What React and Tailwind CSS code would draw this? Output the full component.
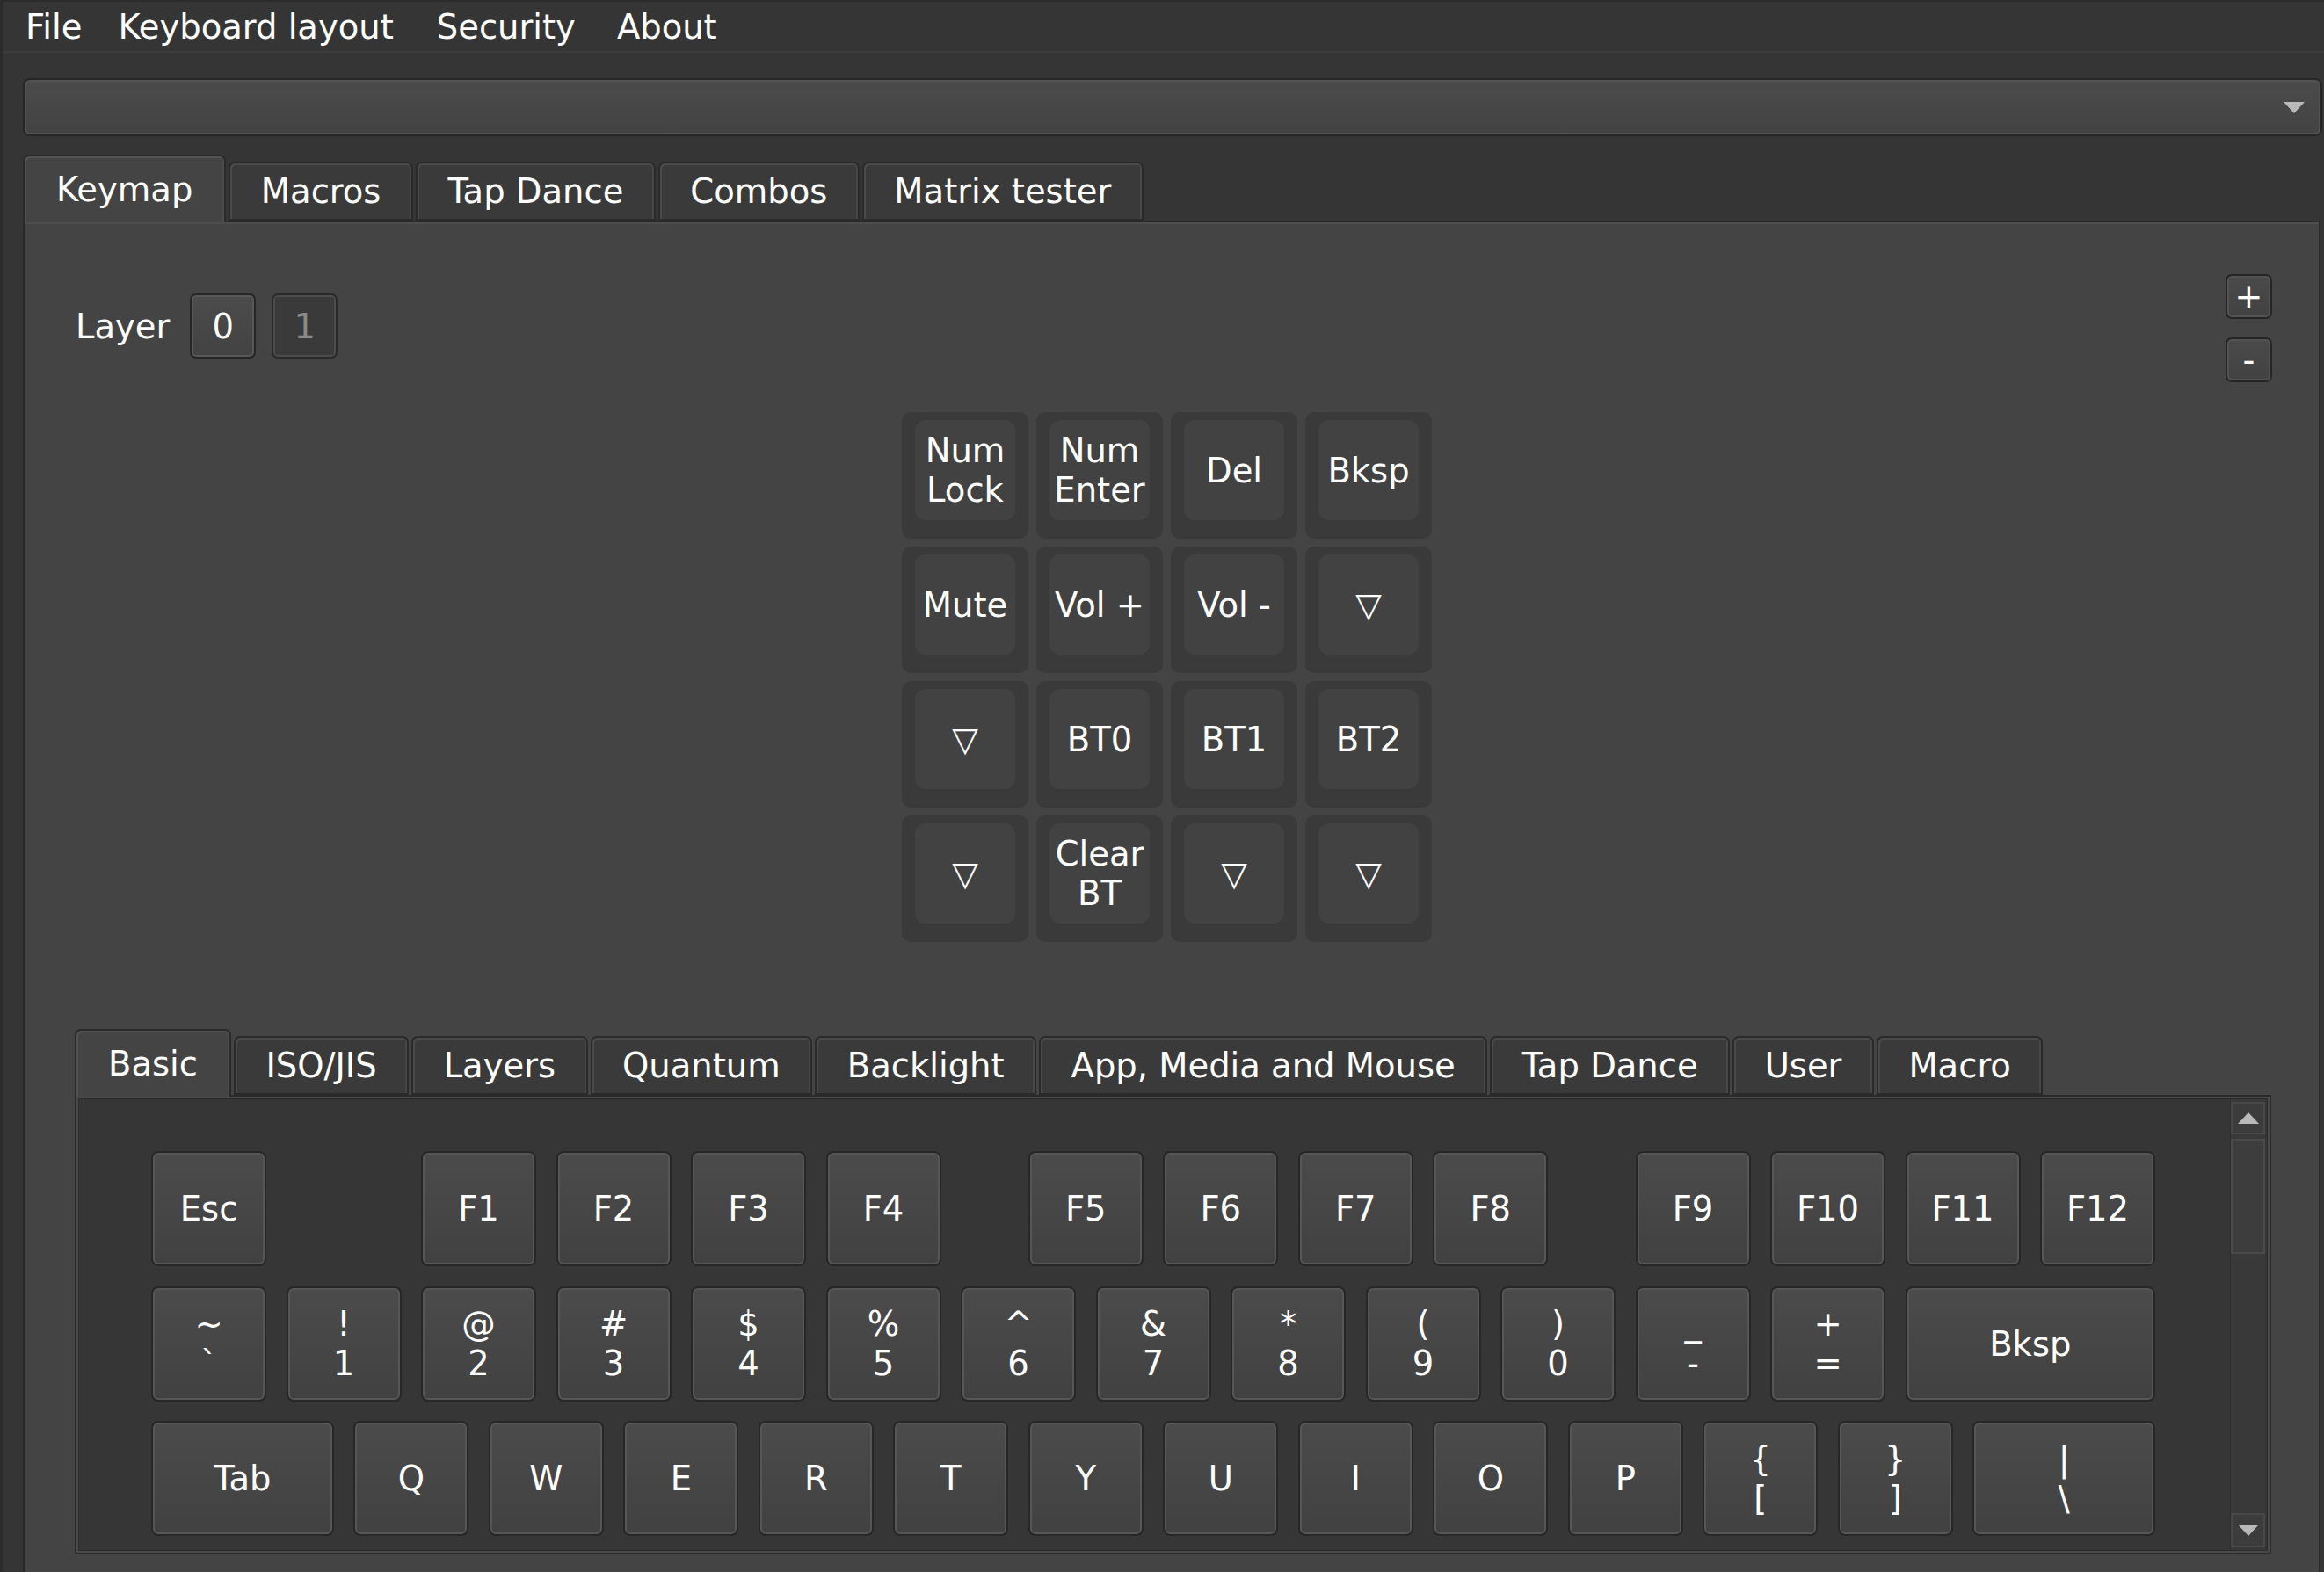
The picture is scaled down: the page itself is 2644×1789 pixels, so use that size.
import React from 'react'

// one keyboard unit, in px
const U = 153.5

const menus = [
  ['File', ''],
  ['Keyboard layout', 'ml-[41px]'],
  ['Security', 'ml-[49px]'],
  ['About', 'ml-[47px]'],
]

const mainTabs = ['Keymap', 'Macros', 'Tap Dance', 'Combos', 'Matrix tester']
const keyTabs = ['Basic', 'ISO/JIS', 'Layers', 'Quantum', 'Backlight', 'App, Media and Mouse', 'Tap Dance', 'User', 'Macro']

const matrix = [
  ['Num\nLock', 'Num\nEnter', 'Del', 'Bksp'],
  ['Mute', 'Vol +', 'Vol -', '▽'],
  ['▽', 'BT0', 'BT1', 'BT2'],
  ['▽', 'Clear\nBT', '▽', '▽'],
]

const rows = [
  [
    { l: 'Esc' }, { gap: 1 },
    { l: 'F1' }, { l: 'F2' }, { l: 'F3' }, { l: 'F4' }, { gap: 0.5 },
    { l: 'F5' }, { l: 'F6' }, { l: 'F7' }, { l: 'F8' }, { gap: 0.5 },
    { l: 'F9' }, { l: 'F10' }, { l: 'F11' }, { l: 'F12' },
  ],
  [
    ...[['~', '`'], ['!', '1'], ['@', '2'], ['#', '3'], ['$', '4'], ['%', '5'], ['^', '6'],
      ['&', '7'], ['*', '8'], ['(', '9'], [')', '0'], ['_', '-'], ['+', '=']].map(l => ({ l })),
    { l: 'Bksp', w: 2 },
  ],
  [
    { l: 'Tab', w: 1.5 },
    ...'QWERTYUIOP'.split('').map(l => ({ l })),
    { l: ['{', '['] }, { l: ['}', ']'] },
    { l: ['|', '\\'], w: 1.5 },
  ],
]

function TabBar({ tabs, active }) {
  return (
    <div className="relative z-10 flex h-[75px] items-end gap-[3px]">
      {tabs.map((t, i) =>
        i === active ? (
          <div
            key={t}
            className="-mb-[2px] flex h-[77px] items-center rounded-t-[7px] border-2 border-b-0 border-[#2a2a2a] bg-[#444444] px-[36px] shadow-[inset_2px_2px_0_#525252,inset_-2px_0_0_#4c4c4c]"
          >
            {t}
          </div>
        ) : (
          <div
            key={t}
            className="flex h-[67px] items-center rounded-t-[7px] border-2 border-[#2a2a2a] bg-[#3a3a3a] px-[34.5px] shadow-[inset_2px_2px_0_#4a4a4a,inset_-2px_0_0_#474747]"
          >
            {t}
          </div>
        )
      )}
    </div>
  )
}

function Key({ l, w = 1 }) {
  const lines = Array.isArray(l) ? l : [l]
  return (
    <div className="h-full shrink-0" style={{ width: w * U }}>
      <div
        className="flex h-[131px] flex-col items-center justify-center rounded-[8px] border-2 border-[#272727] bg-linear-to-b from-[#4b4b4b] to-[#414141] shadow-[inset_0_0_0_2px_#565656]"
        style={{ width: w * U - 22.4 }}
      >
        {lines.map((s, i) => (
          <span key={i} className="whitespace-pre">{s}</span>
        ))}
      </div>
    </div>
  )
}

function MatrixKey({ label }) {
  return (
    <div className="h-[144px] w-[144px] rounded-[10px] bg-[#3a3a3a] px-[15px] pt-[9px]">
      <div className="flex h-[114px] items-center justify-center whitespace-pre-line rounded-[12px] bg-[#424242] text-center">
        {label}
      </div>
    </div>
  )
}

function Triangle({ up }) {
  return (
    <svg width="24" height="13" viewBox="0 0 24 13">
      <polygon points={up ? '0,13 24,13 12,0' : '0,0 24,0 12,13'} fill="#b9b9b9" />
    </svg>
  )
}

function Scrollbar() {
  return (
    <div className="mr-[2px] flex w-[40px] flex-col border-l border-[#2e2e2e] bg-[#393939] py-[3px]">
      <div className="flex h-[37px] items-center justify-center border-2 border-[#484848] bg-[#3c3c3c]">
        <Triangle up />
      </div>
      <div className="mt-[5px] h-[131px] border-2 border-[#4a4a4a] bg-[#3d3d3d]" />
      <div className="flex-1" />
      <div className="flex h-[39px] items-center justify-center border-2 border-[#484848] bg-[#3c3c3c]">
        <Triangle />
      </div>
    </div>
  )
}

export default function App() {
  return (
    <div className="flex h-[1789px] w-[2644px] flex-col overflow-hidden border-t-2 border-l-[3px] border-[#2b2b2b] bg-[#353535] font-['DejaVu_Sans',sans-serif] text-[38.5px] leading-[45px] text-white">
      {/* menu bar */}
      <div className="flex h-[58px] shrink-0 items-center border-b-2 border-[#3c3c3c] pl-[26px]">
        {menus.map(([m, gap]) => (
          <span key={m} className={gap}>{m}</span>
        ))}
      </div>

      <div className="flex flex-col pl-[23px] pr-[2px] pt-[29px]">
        {/* keyboard selector */}
        <div className="flex h-[66px] items-center justify-end rounded-[8px] border-2 border-[#262626] bg-linear-to-b from-[#4b4b4b] to-[#434343] pr-[18px] shadow-[inset_0_0_0_2px_#525252]">
          <Triangle />
        </div>

        <div className="mt-[21px] mr-[2px]">
          <TabBar tabs={mainTabs} active={0} />
        </div>

        <div className="mr-[2px] h-[1600px] shrink-0 border-2 border-[#2a2a2a] bg-[#444444] shadow-[inset_0_2px_0_#4e4e4e]">
          {/* layer selector and add/remove */}
          <div className="flex items-start justify-between pl-[58px] pr-[53px] pt-[59px]">
            <div className="mt-[22px] flex items-center">
              <span>Layer</span>
              <div className="ml-[23px] flex h-[74px] w-[75px] items-center justify-center rounded-[7px] border-2 border-[#262626] bg-linear-to-b from-[#4c4c4c] to-[#424242] shadow-[inset_0_0_0_2px_#585858]">
                0
              </div>
              <div className="ml-[18px] flex h-[74px] w-[75px] items-center justify-center rounded-[7px] border-2 border-[#2a2a2a] bg-[#3a3a3a] text-[#8a8a8a] shadow-[inset_0_0_0_2px_#4c4c4c]">
                1
              </div>
            </div>
            <div className="flex flex-col gap-[21px]">
              <div className="flex h-[51px] w-[53px] items-center justify-center rounded-[7px] border-2 border-[#262626] bg-linear-to-b from-[#4a4a4a] to-[#424242] shadow-[inset_0_0_0_2px_#535353]">
                +
              </div>
              <div className="flex h-[51px] w-[53px] items-center justify-center rounded-[7px] border-2 border-[#262626] bg-linear-to-b from-[#4a4a4a] to-[#424242] shadow-[inset_0_0_0_2px_#535353]">
                -
              </div>
            </div>
          </div>

          {/* device matrix */}
          <div className="mt-[34px] flex justify-center pr-[11px]">
            <div className="grid grid-cols-4 gap-[9px]">
              {matrix.flat().map((k, i) => (
                <MatrixKey key={i} label={k} />
              ))}
            </div>
          </div>

          {/* keycode picker */}
          <div className="mt-[99px] pl-[57px] pr-[54px]">
            <TabBar tabs={keyTabs} active={0} />
            <div className="flex h-[523px] border-2 border-[#2a2a2a] bg-[#4a4a4a] p-[2px]">
              <div className="flex flex-1 overflow-hidden border border-[#2b2b2b] bg-[#363636]">
                <div className="flex flex-1 flex-col overflow-hidden pl-[82px] pt-[59px]">
                  {rows.map((row, r) => (
                    <div key={r} className="flex shrink-0" style={{ height: U }}>
                      {row.map((k, i) =>
                        k.gap ? (
                          <div key={i} className="shrink-0" style={{ width: k.gap * U }} />
                        ) : (
                          <Key key={i} l={k.l} w={k.w} />
                        )
                      )}
                    </div>
                  ))}
                </div>
                <Scrollbar />
              </div>
            </div>
          </div>
        </div>
      </div>
    </div>
  )
}
